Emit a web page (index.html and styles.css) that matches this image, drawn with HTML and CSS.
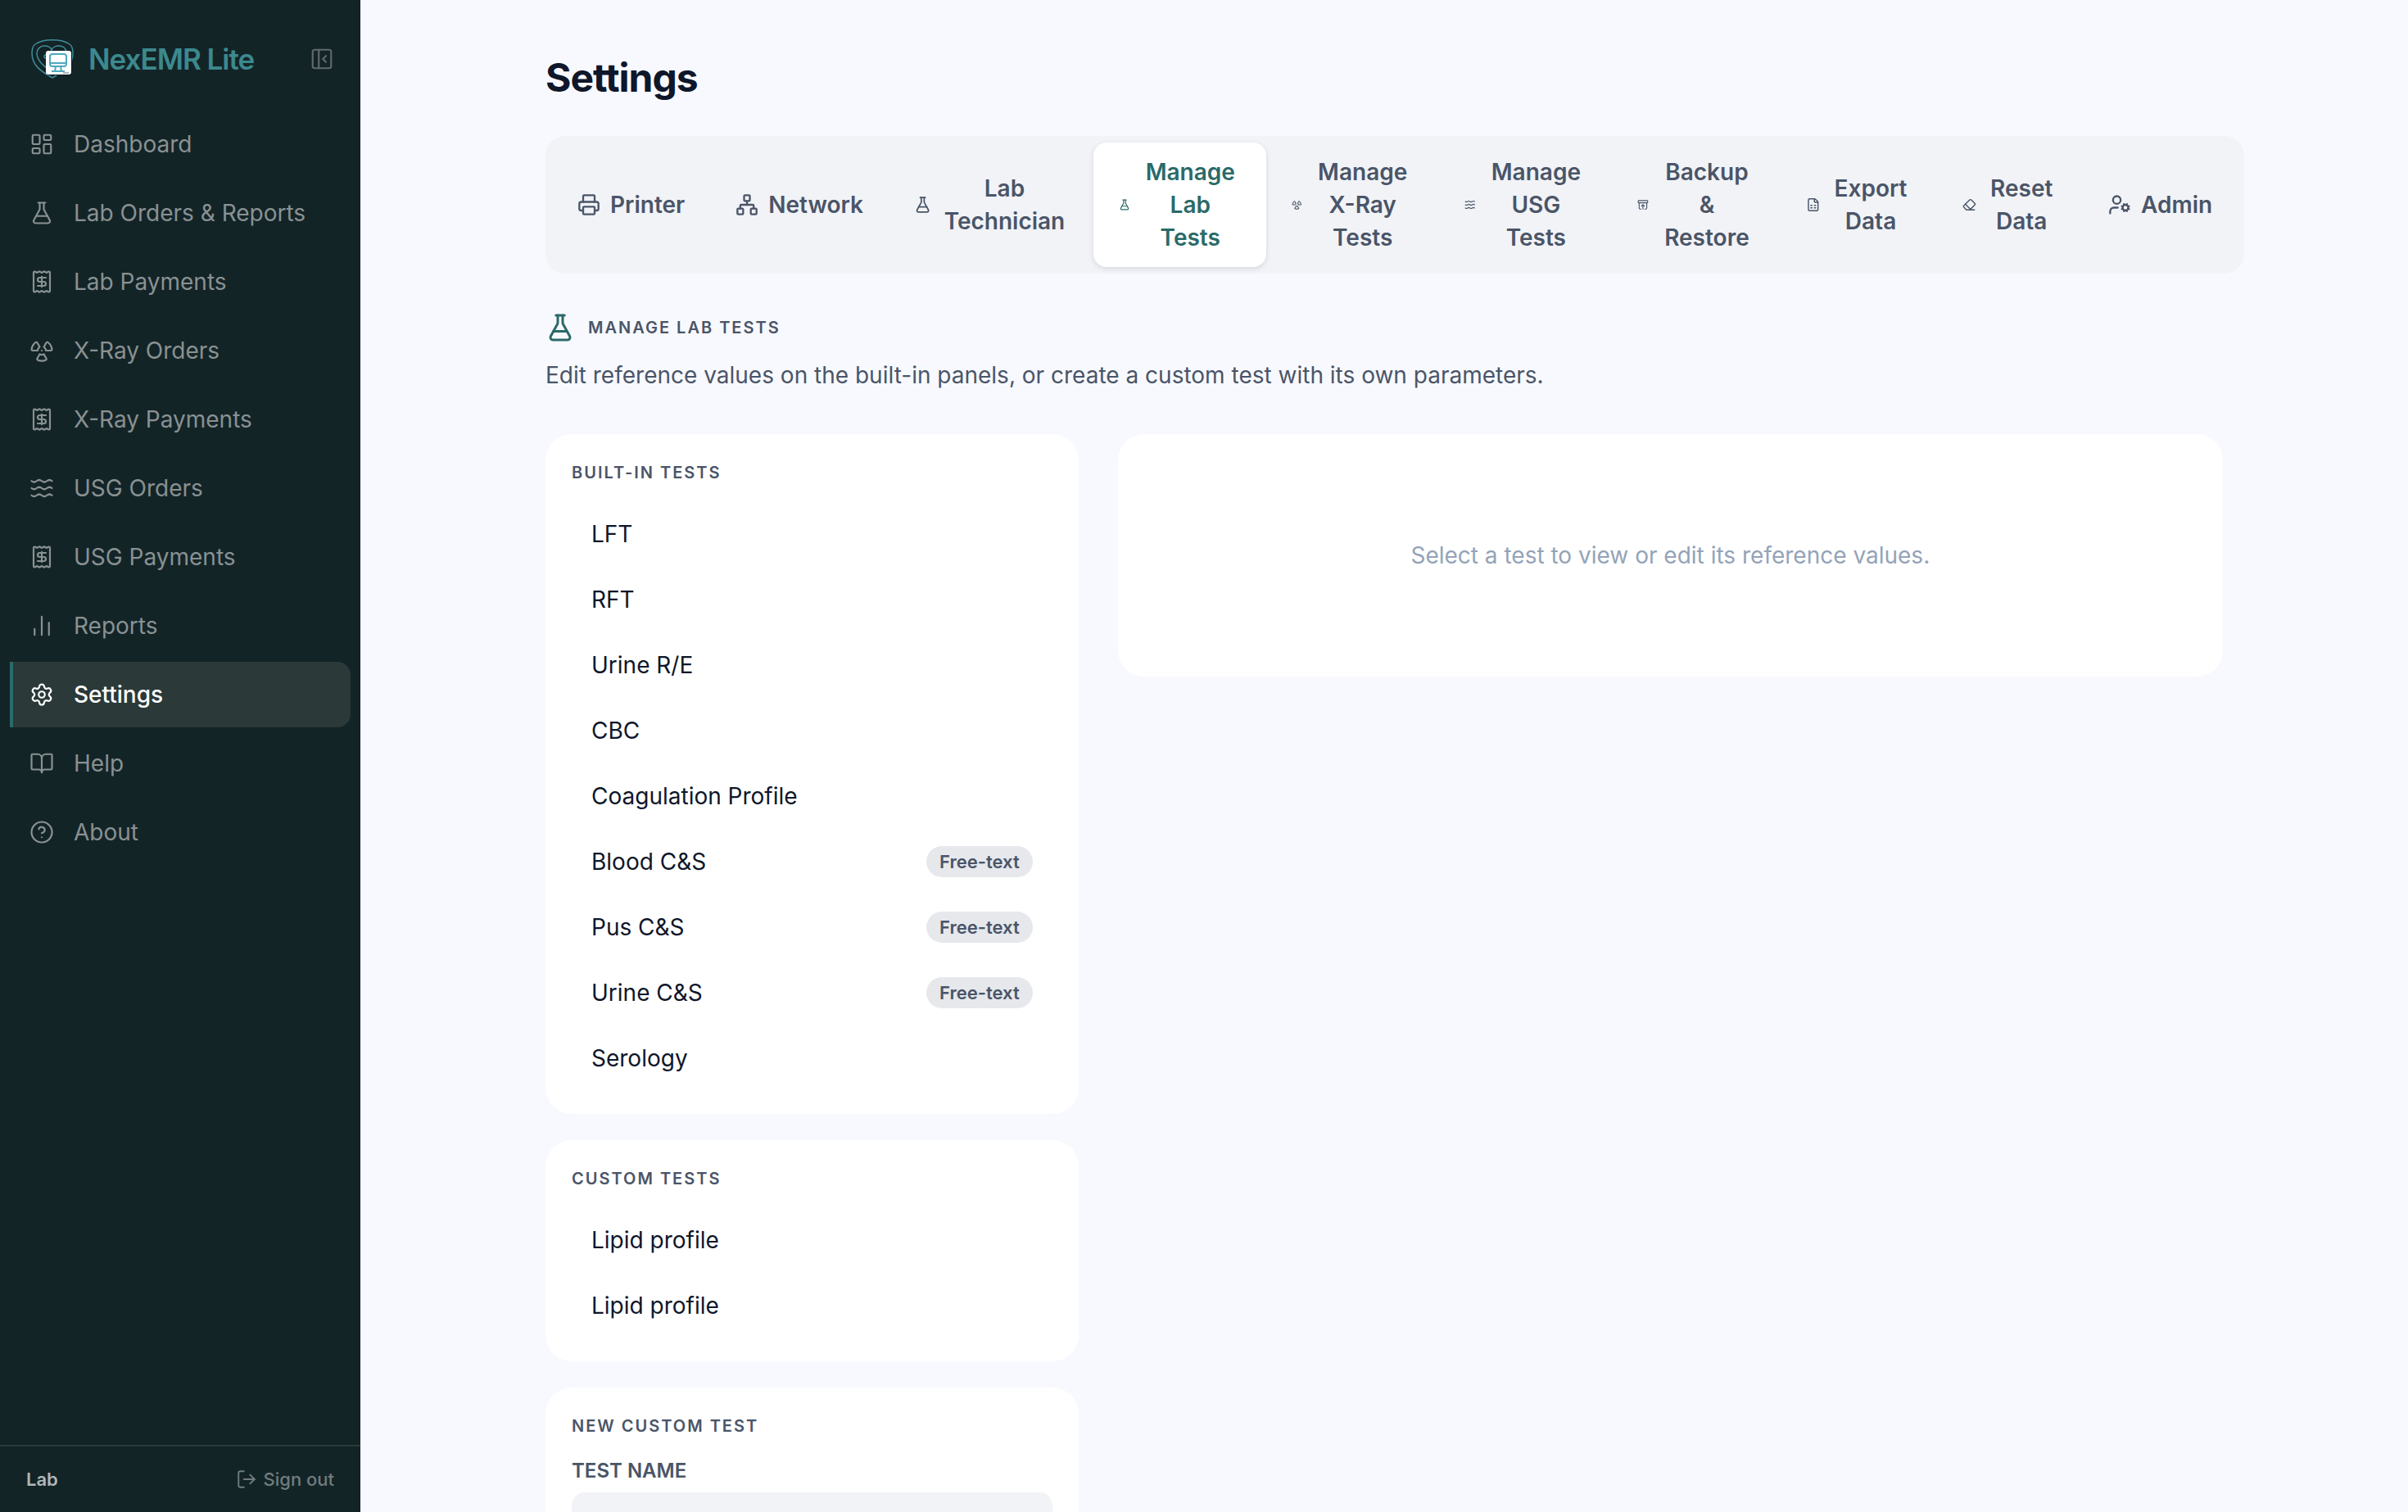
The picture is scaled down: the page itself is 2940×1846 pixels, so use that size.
FILE: index.html
```html
<!DOCTYPE html>
<html lang="en">
<head>
    <meta charset="UTF-8">
    <meta name="viewport" content="width=device-width, initial-scale=1.0">
    <title>NexEMR Lite - Settings</title>
    <link rel="stylesheet" href="styles.css">
</head>
<body>
    <!-- shared icons -->
    <svg class="icon-defs" aria-hidden="true">
        <symbol id="i-dashboard" viewBox="0 0 24 24"><rect width="7" height="9" x="3" y="3" rx="1"/><rect width="7" height="5" x="14" y="3" rx="1"/><rect width="7" height="9" x="14" y="12" rx="1"/><rect width="7" height="5" x="3" y="16" rx="1"/></symbol>
        <symbol id="i-flask" viewBox="0 0 24 24"><path d="M14 2v6a2 2 0 0 0 .245.96l5.51 10.08A2 2 0 0 1 18 22H6a2 2 0 0 1-1.755-2.96l5.51-10.08A2 2 0 0 0 10 8V2"/><path d="M6.453 15h11.094"/><path d="M8.5 2h7"/></symbol>
        <symbol id="i-receipt" viewBox="0 0 24 24"><path d="M12 17V7"/><path d="M16 8h-6a2 2 0 0 0 0 4h4a2 2 0 0 1 0 4H8"/><path d="M4 3a1 1 0 0 1 1-1 1.3 1.3 0 0 1 .7.2l.933.6a1.3 1.3 0 0 0 1.4 0l.934-.6a1.3 1.3 0 0 1 1.4 0l.933.6a1.3 1.3 0 0 0 1.4 0l.933-.6a1.3 1.3 0 0 1 1.4 0l.934.6a1.3 1.3 0 0 0 1.4 0l.933-.6A1.3 1.3 0 0 1 19 2a1 1 0 0 1 1 1v18a1 1 0 0 1-1 1 1.3 1.3 0 0 1-.7-.2l-.933-.6a1.3 1.3 0 0 0-1.4 0l-.934.6a1.3 1.3 0 0 1-1.4 0l-.933-.6a1.3 1.3 0 0 0-1.4 0l-.933.6a1.3 1.3 0 0 1-1.4 0l-.934-.6a1.3 1.3 0 0 0-1.4 0l-.933.6a1.3 1.3 0 0 1-.7.2 1 1 0 0 1-1-1z"/></symbol>
        <symbol id="i-radiation" viewBox="0 0 24 24"><path d="M12 12h.01"/><path d="M14 15.464a4 4 0 0 1-4 0l-2.472 4.282a1 1 0 0 0 .465 1.416 10 10 0 0 0 8.014 0 1 1 0 0 0 .465-1.416z"/><path d="M16 12a4 4 0 0 0-2-3.464l2.472-4.282a1 1 0 0 1 1.46-.305 10 10 0 0 1 4.006 6.94A1 1 0 0 1 21 12z"/><path d="M8 12a4 4 0 0 1 2-3.464L7.528 4.254a1 1 0 0 0-1.46-.305 10 10 0 0 0-4.006 6.94A1 1 0 0 0 3 12z"/></symbol>
        <symbol id="i-waves" viewBox="0 0 24 24"><path d="M2 5q2.5 2 5 0t5 0 5 0 5 0"/><path d="M2 12q2.5 2 5 0t5 0 5 0 5 0"/><path d="M2 19q2.5 2 5 0t5 0 5 0 5 0"/></symbol>
        <symbol id="i-chart" viewBox="0 0 24 24"><path d="M5 21v-6"/><path d="M12 21V3"/><path d="M19 21V9"/></symbol>
        <symbol id="i-settings" viewBox="0 0 24 24"><path d="M9.671 4.136a2.34 2.34 0 0 1 4.659 0 2.34 2.34 0 0 0 3.319 1.915 2.34 2.34 0 0 1 2.33 4.033 2.34 2.34 0 0 0 0 3.831 2.34 2.34 0 0 1-2.33 4.033 2.34 2.34 0 0 0-3.319 1.915 2.34 2.34 0 0 1-4.659 0 2.34 2.34 0 0 0-3.32-1.915 2.34 2.34 0 0 1-2.33-4.033 2.34 2.34 0 0 0 0-3.831A2.34 2.34 0 0 1 6.35 6.051a2.34 2.34 0 0 0 3.319-1.915"/><circle cx="12" cy="12" r="3"/></symbol>
        <symbol id="i-book" viewBox="0 0 24 24"><path d="M12 7v14"/><path d="M3 18a1 1 0 0 1-1-1V4a1 1 0 0 1 1-1h5a4 4 0 0 1 4 4 4 4 0 0 1 4-4h5a1 1 0 0 1 1 1v13a1 1 0 0 1-1 1h-6a3 3 0 0 0-3 3 3 3 0 0 0-3-3z"/></symbol>
        <symbol id="i-help" viewBox="0 0 24 24"><circle cx="12" cy="12" r="10"/><path d="M9.09 9a3 3 0 0 1 5.83 1c0 2-3 3-3 3"/><path d="M12 17h.01"/></symbol>
        <symbol id="i-panel" viewBox="0 0 24 24"><rect width="18" height="18" x="3" y="3" rx="2"/><path d="M9 3v18"/><path d="m16 15-3-3 3-3"/></symbol>
        <symbol id="i-logout" viewBox="0 0 24 24"><path d="m16 17 5-5-5-5"/><path d="M21 12H9"/><path d="M9 21H5a2 2 0 0 1-2-2V5a2 2 0 0 1 2-2h4"/></symbol>
        <symbol id="i-printer" viewBox="0 0 24 24"><path d="M6 18H4a2 2 0 0 1-2-2v-5a2 2 0 0 1 2-2h16a2 2 0 0 1 2 2v5a2 2 0 0 1-2 2h-2"/><path d="M6 9V3a1 1 0 0 1 1-1h10a1 1 0 0 1 1 1v6"/><rect x="6" y="14" width="12" height="8" rx="1"/></symbol>
        <symbol id="i-network" viewBox="0 0 24 24"><rect x="16" y="16" width="6" height="6" rx="1"/><rect x="2" y="16" width="6" height="6" rx="1"/><rect x="9" y="2" width="6" height="6" rx="1"/><path d="M5 16v-3a1 1 0 0 1 1-1h12a1 1 0 0 1 1 1v3"/><path d="M12 12V8"/></symbol>
        <symbol id="i-archive" viewBox="0 0 24 24"><rect width="20" height="5" x="2" y="3" rx="1"/><path d="M4 8v11a2 2 0 0 0 2 2h2"/><path d="M20 8v11a2 2 0 0 1-2 2h-2"/><path d="m9 15 3-3 3 3"/><path d="M12 12v9"/></symbol>
        <symbol id="i-sheet" viewBox="0 0 24 24"><path d="M6 22a2 2 0 0 1-2-2V4a2 2 0 0 1 2-2h8a2.4 2.4 0 0 1 1.704.706l3.588 3.588A2.4 2.4 0 0 1 20 8v12a2 2 0 0 1-2 2z"/><path d="M14 2v5a1 1 0 0 0 1 1h5"/><path d="M8 13h2"/><path d="M14 13h2"/><path d="M8 17h2"/><path d="M14 17h2"/></symbol>
        <symbol id="i-eraser" viewBox="0 0 24 24"><path d="M21 21H8a2 2 0 0 1-1.42-.587l-3.994-3.999a2 2 0 0 1 0-2.828l10-10a2 2 0 0 1 2.829 0l5.999 6a2 2 0 0 1 0 2.828L12.834 21"/><path d="m5.082 11.09 8.828 8.828"/></symbol>
        <symbol id="i-usercog" viewBox="0 0 24 24"><path d="M10 15H6a4 4 0 0 0-4 4v2"/><path d="m14.305 16.53.923-.382"/><path d="m15.228 13.852-.923-.383"/><path d="m16.852 12.228-.383-.923"/><path d="m16.852 17.772-.383.924"/><path d="m19.148 12.228.383-.923"/><path d="m19.53 18.696-.382-.924"/><path d="m20.772 13.852.924-.383"/><path d="m20.772 16.148.924.383"/><circle cx="18" cy="15" r="3"/><circle cx="9" cy="7" r="4"/></symbol>
    </svg>

    <aside class="sidebar">
        <div class="brand">
            <svg class="brand-logo" viewBox="0 0 56 56" aria-hidden="true">
                <path class="logo-line" d="M28 51C14 43 3 36 3 21c0-6 1-9 4-11C17 3 39 3 49 10c3 2 4 5 4 11 0 15-11 22-25 30z"/>
                <path class="logo-line" d="M27 44C17 36 9 30 9 21c0-5 4-9 9-9 5 0 8 2 9 5 1-3 5-5 9-5 5 0 8 3 9 7"/>
                <circle class="logo-line" cx="20" cy="25" r="2"/>
                <rect x="21" y="19" width="31" height="29" rx="3" fill="#08191c"/>
                <rect x="20" y="18" width="31" height="29" rx="3" fill="#fff"/>
                <rect class="logo-screen" x="25" y="22" width="20" height="15" rx="3"/>
                <path class="logo-screen" d="M25 33h20M32 37l-1 6M38 37l1 6M27 43h16"/>
                <path d="M41 45h7" stroke="#b0b6b7" stroke-width="2"/>
            </svg>
            <span class="brand-name">NexEMR Lite</span>
            <button class="collapse" type="button" aria-label="Collapse sidebar"><svg class="icon"><use href="#i-panel"/></svg></button>
        </div>
        <nav class="nav">
            <a href="#dashboard"><svg class="icon"><use href="#i-dashboard"/></svg>Dashboard</a>
            <a href="#lab-orders"><svg class="icon"><use href="#i-flask"/></svg>Lab Orders &amp; Reports</a>
            <a href="#lab-payments"><svg class="icon"><use href="#i-receipt"/></svg>Lab Payments</a>
            <a href="#xray-orders"><svg class="icon"><use href="#i-radiation"/></svg>X-Ray Orders</a>
            <a href="#xray-payments"><svg class="icon"><use href="#i-receipt"/></svg>X-Ray Payments</a>
            <a href="#usg-orders"><svg class="icon"><use href="#i-waves"/></svg>USG Orders</a>
            <a href="#usg-payments"><svg class="icon"><use href="#i-receipt"/></svg>USG Payments</a>
            <a href="#reports"><svg class="icon"><use href="#i-chart"/></svg>Reports</a>
            <a href="#settings" class="active"><svg class="icon"><use href="#i-settings"/></svg>Settings</a>
            <a href="#help"><svg class="icon"><use href="#i-book"/></svg>Help</a>
            <a href="#about"><svg class="icon"><use href="#i-help"/></svg>About</a>
        </nav>
        <div class="sidebar-footer">
            <span class="user">Lab</span>
            <button class="signout" type="button"><svg class="icon"><use href="#i-logout"/></svg>Sign out</button>
        </div>
    </aside>

    <main class="main">
        <div class="page">
            <h1>Settings</h1>

            <div class="tabs" role="tablist">
                <button type="button" role="tab"><svg class="icon"><use href="#i-printer"/></svg><span>Printer</span></button>
                <button type="button" role="tab"><svg class="icon"><use href="#i-network"/></svg><span>Network</span></button>
                <button type="button" role="tab"><svg class="icon"><use href="#i-flask"/></svg><span>Lab Technician</span></button>
                <button type="button" role="tab" class="active" aria-selected="true"><svg class="icon"><use href="#i-flask"/></svg><span>Manage Lab Tests</span></button>
                <button type="button" role="tab"><svg class="icon"><use href="#i-radiation"/></svg><span>Manage X-Ray Tests</span></button>
                <button type="button" role="tab"><svg class="icon"><use href="#i-waves"/></svg><span>Manage USG Tests</span></button>
                <button type="button" role="tab"><svg class="icon"><use href="#i-archive"/></svg><span>Backup &amp; Restore</span></button>
                <button type="button" role="tab"><svg class="icon"><use href="#i-sheet"/></svg><span>Export Data</span></button>
                <button type="button" role="tab"><svg class="icon"><use href="#i-eraser"/></svg><span>Reset Data</span></button>
                <button type="button" role="tab"><svg class="icon"><use href="#i-usercog"/></svg><span>Admin</span></button>
            </div>

            <div class="section-head">
                <svg class="icon"><use href="#i-flask"/></svg>
                <h2 class="label">Manage Lab Tests</h2>
            </div>
            <p class="section-desc">Edit reference values on the built-in panels, or create a custom test with its own parameters.</p>

            <div class="grid">
                <div class="column">
                    <section class="card">
                        <h3 class="label">Built-in Tests</h3>
                        <div class="test-list">
                            <button type="button">LFT</button>
                            <button type="button">RFT</button>
                            <button type="button">Urine R/E</button>
                            <button type="button">CBC</button>
                            <button type="button">Coagulation Profile</button>
                            <button type="button">Blood C&amp;S <span class="badge">Free-text</span></button>
                            <button type="button">Pus C&amp;S <span class="badge">Free-text</span></button>
                            <button type="button">Urine C&amp;S <span class="badge">Free-text</span></button>
                            <button type="button">Serology</button>
                        </div>
                    </section>
                    <section class="card">
                        <h3 class="label">Custom Tests</h3>
                        <div class="test-list">
                            <button type="button">Lipid profile</button>
                            <button type="button">Lipid profile</button>
                        </div>
                    </section>
                    <section class="card">
                        <h3 class="label">New Custom Test</h3>
                        <label class="field-label" for="testName">Test name</label>
                        <input class="field" type="text" id="testName">
                    </section>
                </div>
                <section class="card empty">Select a test to view or edit its reference values.</section>
            </div>
        </div>
    </main>
</body>
</html>
```
FILE: styles.css
```css
* {
    box-sizing: border-box;
}
body {
    margin: 0;
    display: flex;
    height: 100vh;
    overflow: hidden;
    font-family: Inter, sans-serif;
    font-size: 28px;
    line-height: 40px;
    color: #0f172a;
    background: #f8f9fe;
}
h1, h2, h3, p {
    margin: 0;
}
button {
    font: inherit;
    color: inherit;
    background: none;
    border: none;
    padding: 0;
    cursor: pointer;
}
.icon-defs {
    position: absolute;
    width: 0;
    height: 0;
}
.icon {
    width: 30px;
    height: 30px;
    fill: none;
    stroke: currentColor;
    stroke-width: 1.75;
    stroke-linecap: round;
    stroke-linejoin: round;
}

/* sidebar */
.sidebar {
    flex: none;
    width: 440px;
    display: flex;
    flex-direction: column;
    background: #132427;
}
.brand {
    display: flex;
    align-items: center;
    gap: 16px;
    height: 136px;
    padding: 8px 32px 0 36px;
}
.brand-logo {
    width: 56px;
    height: 56px;
}
.logo-line {
    fill: none;
    stroke: #3f8d99;
    stroke-width: 1.5;
}
.logo-screen {
    fill: none;
    stroke: #4fa9bd;
    stroke-width: 2;
}
.brand-name {
    flex: 1;
    font-size: 35px;
    font-weight: 600;
    letter-spacing: -1px;
    color: #3c898e;
}
.collapse {
    display: flex;
    color: #5e6a6c;
}
.nav {
    flex: 1;
    display: flex;
    flex-direction: column;
    gap: 4px;
    padding: 0 12px;
}
.nav a {
    display: flex;
    align-items: center;
    gap: 24px;
    padding: 20px;
    border-left: 4px solid transparent;
    border-radius: 0 16px 16px 0;
    color: #899192;
    text-decoration: none;
}
.nav a.active {
    background: #2b3939;
    border-left-color: #2b6a6b;
    color: #fff;
    font-weight: 500;
}
.sidebar-footer {
    display: flex;
    align-items: center;
    justify-content: space-between;
    padding: 20px 32px;
    border-top: 2px solid #2a3a3b;
    font-size: 22px;
    font-weight: 600;
}
.user {
    color: #b1b7b8;
}
.signout {
    display: flex;
    align-items: center;
    gap: 8px;
    color: #717c7d;
    font-weight: 500;
}
.signout .icon {
    width: 26px;
    height: 26px;
}

/* page */
.main {
    flex: 1;
    padding: 64px;
}
.page {
    max-width: 2048px;
    margin: 0 auto;
}
h1 {
    margin-bottom: 40px;
    font-size: 48px;
    font-weight: 700;
    line-height: 62px;
    letter-spacing: -1px;
}
.tabs {
    display: inline-flex;
    padding: 8px;
    border-radius: 24px;
    background: #f2f3f7;
    color: #4a5568;
    font-weight: 600;
}
.tabs button {
    display: flex;
    align-items: center;
    justify-content: center;
    gap: 12px;
    padding: 16px 31px;
    border-radius: 16px;
}
.tabs .icon {
    width: 28px;
    height: 28px;
    min-width: 0;
    stroke-width: 2;
}
.tabs .active {
    background: #fff;
    color: #2a6a68;
    box-shadow: 0 2px 6px rgba(15, 23, 42, 0.12);
}
.label {
    font-size: 20px;
    font-weight: 600;
    line-height: 30px;
    letter-spacing: 2px;
    text-transform: uppercase;
    color: #4a5568;
}
.section-head {
    display: flex;
    align-items: center;
    gap: 16px;
    margin-top: 48px;
}
.section-head .icon {
    width: 36px;
    height: 36px;
    stroke-width: 2;
    color: #2a6a68;
}
.section-desc {
    margin: 20px 0 52px;
    color: #4a5568;
}
.grid {
    display: grid;
    grid-template-columns: repeat(3, 1fr);
    align-items: start;
    gap: 48px;
}
.column {
    display: flex;
    flex-direction: column;
    gap: 32px;
}
.card {
    padding: 32px;
    border-radius: 32px;
    background: #fff;
}
.card .label {
    margin-bottom: 24px;
}
.test-list {
    display: flex;
    flex-direction: column;
    gap: 8px;
}
.test-list button {
    display: flex;
    align-items: center;
    justify-content: space-between;
    padding: 16px 24px;
    border-radius: 16px;
    text-align: left;
}
.badge {
    padding: 4px 16px;
    border-radius: 20px;
    background: #e6e8ec;
    color: #4a5568;
    font-size: 22px;
    font-weight: 600;
    line-height: 30px;
}
.field-label {
    display: block;
    margin-bottom: 10px;
    font-size: 24px;
    font-weight: 600;
    line-height: 32px;
    text-transform: uppercase;
    color: #4a5568;
}
.field {
    display: block;
    width: 100%;
    height: 80px;
    padding: 0 24px;
    border: none;
    border-radius: 16px;
    background: #f2f3f7;
    font: inherit;
}
.empty {
    grid-column: span 2;
    padding: 128px 32px;
    text-align: center;
    color: #94a3b8;
}
```
